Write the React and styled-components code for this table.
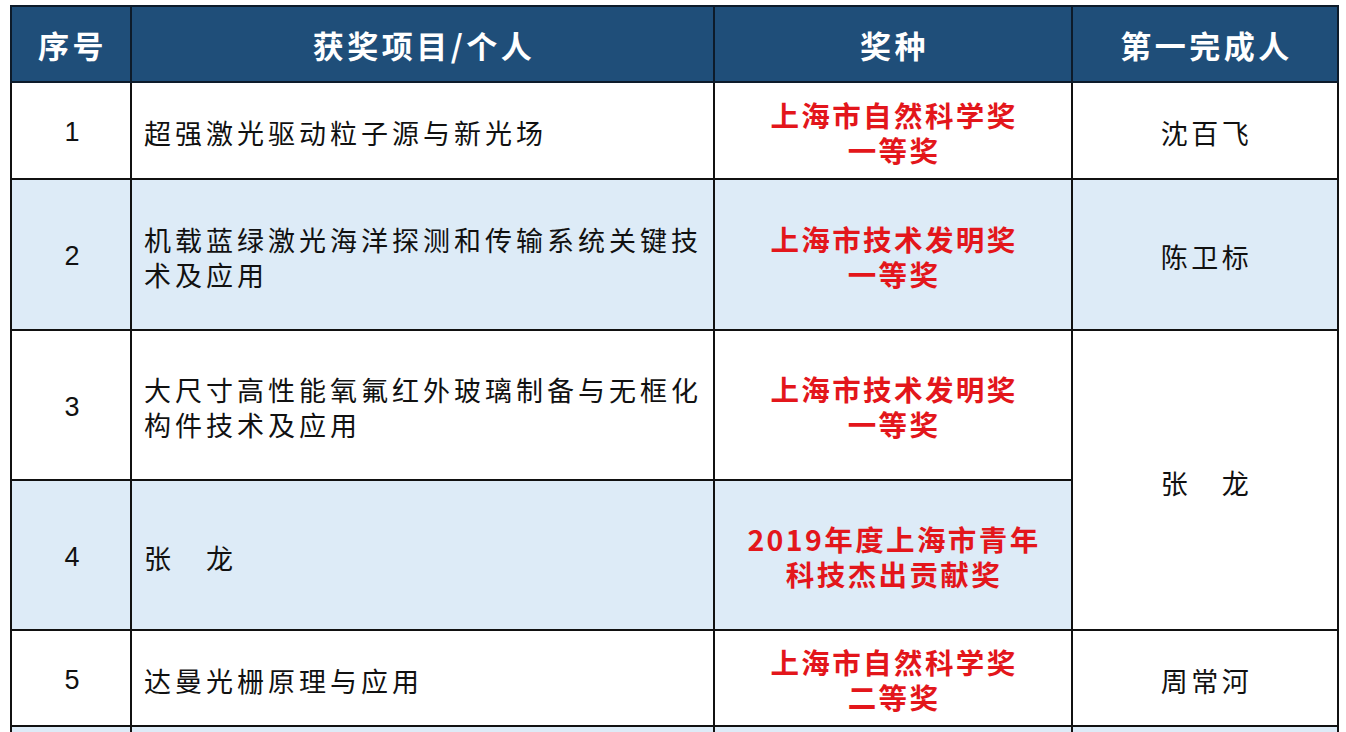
import React from 'react';
import styled, { createGlobalStyle } from 'styled-components';

const GlobalStyle = createGlobalStyle`
  html, body {
    margin: 0;
    padding: 0;
    background: #fff;
  }
  body {
    font-family: "Noto Sans CJK SC", "Noto Sans", sans-serif;
  }
`;

const Page = styled.div`
  padding: 5px 9px 0 10px;
  height: 732px;
  overflow: hidden;
  box-sizing: border-box;
`;

const Table = styled.table`
  width: 1327px;
  border-collapse: collapse;
  table-layout: fixed;
`;

const HeadCell = styled.th`
  background: #1f4e79;
  color: #fff;
  font-size: 31px;
  font-weight: 700;
  letter-spacing: 3.5px;
  height: 74px;
  padding: 0 0 0 3px;
  border: 2px solid #0d1b2a;
  text-align: center;
  vertical-align: middle;
`;

const Row = styled.tr`
  height: ${(p) => p.$h}px;
  background: ${(p) => (p.$shade ? '#ddebf7' : '#fff')};
`;

const Cell = styled.td`
  border: 2px solid #111;
  padding: ${(p) => (p.$left ? '4px 2px 0 12px' : '4px 0 0 3px')};
  vertical-align: middle;
  color: #111;
  font-size: 27px;
  letter-spacing: ${(p) => (p.$left ? '4px' : '3.5px')};
  line-height: 35px;
  white-space: nowrap;
  text-align: ${(p) => (p.$left ? 'left' : 'center')};
  background: ${(p) => (p.$white ? '#fff' : 'inherit')};
`;

const Num = styled(Cell)`
  font-family: "Liberation Sans", Arial, sans-serif;
  padding: 4px 0 0 2px;
  font-size: 27px;
  letter-spacing: 0;
`;

const Award = styled(Cell)`
  color: #e3161b;
  font-weight: 700;
  font-size: 28.5px;
  letter-spacing: 2.4px;
  line-height: 35px;
  padding: 2px 0 0 2px;
`;

const rows = [
  { n: 1, name: ['超强激光驱动粒子源与新光场'], award: ['上海市自然科学奖', '一等奖'], person: '沈百飞', h: 97 },
  { n: 2, name: ['机载蓝绿激光海洋探测和传输系统关键技', '术及应用'], award: ['上海市技术发明奖', '一等奖'], person: '陈卫标', h: 151, shade: true },
  { n: 3, name: ['大尺寸高性能氧氟红外玻璃制备与无框化', '构件技术及应用'], award: ['上海市技术发明奖', '一等奖'], person: '张　龙', span: 2, h: 150 },
  { n: 4, name: ['张　龙'], award: ['2019年度上海市青年', '科技杰出贡献奖'], h: 150, shade: true, skip: true },
  { n: 5, name: ['达曼光栅原理与应用'], award: ['上海市自然科学奖', '二等奖'], person: '周常河', h: 96 },
];

const Lines = ({ items }) =>
  items.map((t, i) => (
    <React.Fragment key={i}>
      {i > 0 && <br />}
      {t}
    </React.Fragment>
  ));

export default function App() {
  return (
    <Page>
      <GlobalStyle />
      <Table>
        <colgroup>
          <col style={{ width: 120 }} />
          <col style={{ width: 583 }} />
          <col style={{ width: 358 }} />
          <col style={{ width: 266 }} />
        </colgroup>
        <thead>
          <tr>
            <HeadCell>序号</HeadCell>
            <HeadCell>获奖项目/个人</HeadCell>
            <HeadCell>奖种</HeadCell>
            <HeadCell>第一完成人</HeadCell>
          </tr>
        </thead>
        <tbody>
          {rows.map((r) => (
            <Row key={r.n} $h={r.h} $shade={r.shade}>
              <Num>{r.n}</Num>
              <Cell $left>
                <Lines items={r.name} />
              </Cell>
              <Award>
                <Lines items={r.award} />
              </Award>
              {!r.skip && (
                <Cell rowSpan={r.span || 1} $white={r.span}>
                  {r.person}
                </Cell>
              )}
            </Row>
          ))}
          <Row $h={96} $shade>
            <Num />
            <Cell $left />
            <Award />
            <Cell />
          </Row>
        </tbody>
      </Table>
    </Page>
  );
}
